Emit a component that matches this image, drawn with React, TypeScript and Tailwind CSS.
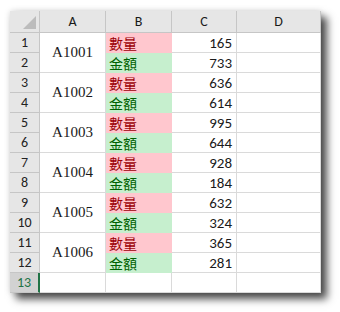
const rows = [
  { id: "A1001", qty: 165, amt: 733 },
  { id: "A1002", qty: 636, amt: 614 },
  { id: "A1003", qty: 995, amt: 644 },
  { id: "A1004", qty: 928, amt: 184 },
  { id: "A1005", qty: 632, amt: 324 },
  { id: "A1006", qty: 365, amt: 281 },
];

const sans = "font-['Calibri','Liberation_Sans',Arial,sans-serif]";
const cjk = "font-['Noto_Sans_CJK_TC','Noto_Sans_CJK_SC',sans-serif]";

const RowHead = ({ n, active }: { n: number; active?: boolean }) => (
  <div
    className={`flex items-center justify-center border-r border-b border-[#c6c6c6] text-[14px] ${sans} ${
      active
        ? "bg-[#d2d2d2] text-[#217346] border-r-2 border-r-[#217346]"
        : "bg-[#e6e6e6] text-[#222]"
    }`}
  >
    {n}
  </div>
);

const App = () => {
  return (
    <div className="w-[340px] h-[312px] bg-white pt-[11px] pl-[10px]">
      <div className="w-[311px] h-[282px] bg-white shadow-[6px_6px_8px_rgba(0,0,0,0.7),0_0_6px_rgba(0,0,0,0.15)] grid grid-cols-[30px_66px_66px_65px_84px] grid-rows-[22px_repeat(13,20px)] text-[#1a1a1a]">
        <div className="relative bg-[#e6e6e6] border-r border-b border-[#c6c6c6]">
          <div className="absolute right-[3px] bottom-[3px] w-0 h-0 border-l-[13px] border-l-transparent border-b-[13px] border-b-[#bcbcbc]" />
        </div>
        {["A", "B", "C", "D"].map((c) => (
          <div
            key={c}
            className={`flex items-center justify-center bg-[#e6e6e6] border-r border-b border-[#c6c6c6] text-[14px] ${sans}`}
          >
            {c}
          </div>
        ))}
        {rows.map((r, i) => (
          <div key={r.id} className="contents">
            <RowHead n={i * 2 + 1} />
            <div className="row-span-2 flex items-center justify-center border-r border-b border-[#dadada] text-[15px] font-['Liberation_Serif','Times_New_Roman',serif]">
              {r.id}
            </div>
            <div className={`bg-[#ffc7ce] text-[#9c0006] text-[14px] leading-[20px] pl-[3px] ${cjk}`}>
              數量
            </div>
            <div className={`border-r border-b border-[#dadada] text-right pr-[4px] text-[15px] leading-[20px] ${sans}`}>
              {r.qty}
            </div>
            <div className="border-r border-b border-[#dadada]" />
            <RowHead n={i * 2 + 2} />
            <div className={`bg-[#c6efce] text-[#006100] text-[14px] leading-[20px] pl-[3px] ${cjk}`}>
              金額
            </div>
            <div className={`border-r border-b border-[#dadada] text-right pr-[4px] text-[15px] leading-[20px] ${sans}`}>
              {r.amt}
            </div>
            <div className="border-r border-b border-[#dadada]" />
          </div>
        ))}
        <RowHead n={13} active />
        <div className="border-r border-b border-[#dadada]" />
        <div className="border-r border-b border-[#dadada]" />
        <div className="border-r border-b border-[#dadada]" />
        <div className="border-r border-b border-[#dadada]" />
      </div>
    </div>
  );
};

export default App;
